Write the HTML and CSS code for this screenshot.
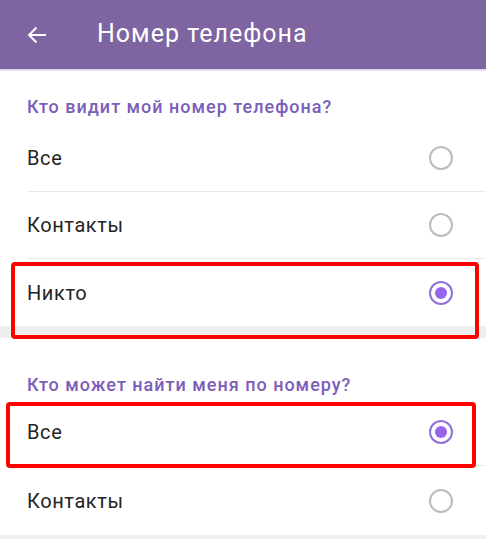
FILE: index.html
```html
<!DOCTYPE html>
<html lang="ru">
<head>
<meta charset="utf-8">
<title>Номер телефона</title>
<link rel="stylesheet" href="styles.css">
</head>
<body>
<div class="screen">
  <header class="appbar">
    <svg class="back" width="20" height="18" viewBox="0 0 20 18" aria-hidden="true">
      <path d="M19 9H2.5M9.5 1.5L2 9l7.5 7.5" fill="none" stroke="#ffffff" stroke-width="2"/>
    </svg>
    <h1 class="title">Номер телефона</h1>
  </header>

  <section class="group">
    <div class="group-title first">Кто видит мой номер телефона?</div>
    <div class="row divided"><span class="label">Все</span><span class="radio"></span></div>
    <div class="row divided"><span class="label">Контакты</span><span class="radio"></span></div>
    <div class="row last"><span class="label">Никто</span><span class="radio checked"></span></div>
  </section>

  <div class="gap"></div>

  <section class="group">
    <div class="group-title second">Кто может найти меня по номеру?</div>
    <div class="row divided"><span class="label">Все</span><span class="radio checked"></span></div>
    <div class="row last tall"><span class="label">Контакты</span><span class="radio"></span></div>
  </section>

  <div class="gap bottom"></div>

  <div class="mark mark-one"></div>
  <div class="mark mark-two"></div>
</div>
</body>
</html>
```

FILE: styles.css
```css
* { box-sizing: border-box; }

html, body {
  margin: 0;
  padding: 0;
  background: #ffffff;
}

body {
  font-family: Roboto, "Noto Sans", "Liberation Sans", sans-serif;
  color: #222222;
}

.screen {
  position: relative;
  width: 486px;
  height: 539px;
  overflow: hidden;
  background: #ffffff;
}

.appbar {
  height: 69px;
  background: #7e64a1;
  display: flex;
  align-items: center;
  padding-left: 27px;
  box-shadow: 0 1px 2px rgba(90, 60, 140, 0.35);
  position: relative;
  z-index: 1;
}

.back {
  display: block;
  flex: none;
}

.title {
  margin: -2px 0 0 50px;
  font-size: 25px;
  font-weight: 400;
  color: #ffffff;
  letter-spacing: 1px;
}

.group-title {
  padding-left: 27px;
  font-size: 18px;
  line-height: 20px;
  font-weight: 500;
  color: #7b5dba;
  letter-spacing: 1px;
}

.group-title.first {
  padding-top: 28px;
  padding-bottom: 8px;
}

.group-title.second {
  padding-top: 37px;
  padding-bottom: 4px;
}

.row {
  height: 66px;
  display: flex;
  align-items: center;
  justify-content: space-between;
  padding-left: 27px;
  padding-right: 33px;
  position: relative;
}

.row.divided {
  height: 67px;
  border-bottom: 1px solid transparent;
}

.row.divided::after {
  content: "";
  position: absolute;
  left: 27px;
  right: 0;
  bottom: -1px;
  height: 1px;
  background: #e9e9e9;
}

.row.last {
  height: 67px;
}

.row.tall {
  height: 69px;
}

.label {
  font-size: 20px;
  color: #242424;
  letter-spacing: 0.6px;
}

.radio {
  width: 24px;
  height: 24px;
  border-radius: 50%;
  border: 2px solid #bcbcbc;
  flex: none;
  display: flex;
  align-items: center;
  justify-content: center;
}

.radio.checked {
  border: 2.5px solid #8f72d9;
}

.radio.checked::before {
  content: "";
  width: 12px;
  height: 12px;
  border-radius: 50%;
  background: #9565ee;
}

.gap {
  height: 12px;
  background: #efefef;
}

.gap.bottom {
  height: 10px;
}

.mark {
  position: absolute;
  border: 4px solid #ff0000;
  border-radius: 4px;
}

.mark-one {
  left: 11px;
  top: 262px;
  width: 468px;
  height: 77px;
}

.mark-two {
  left: 6px;
  top: 402px;
  width: 470px;
  height: 66px;
}
```
